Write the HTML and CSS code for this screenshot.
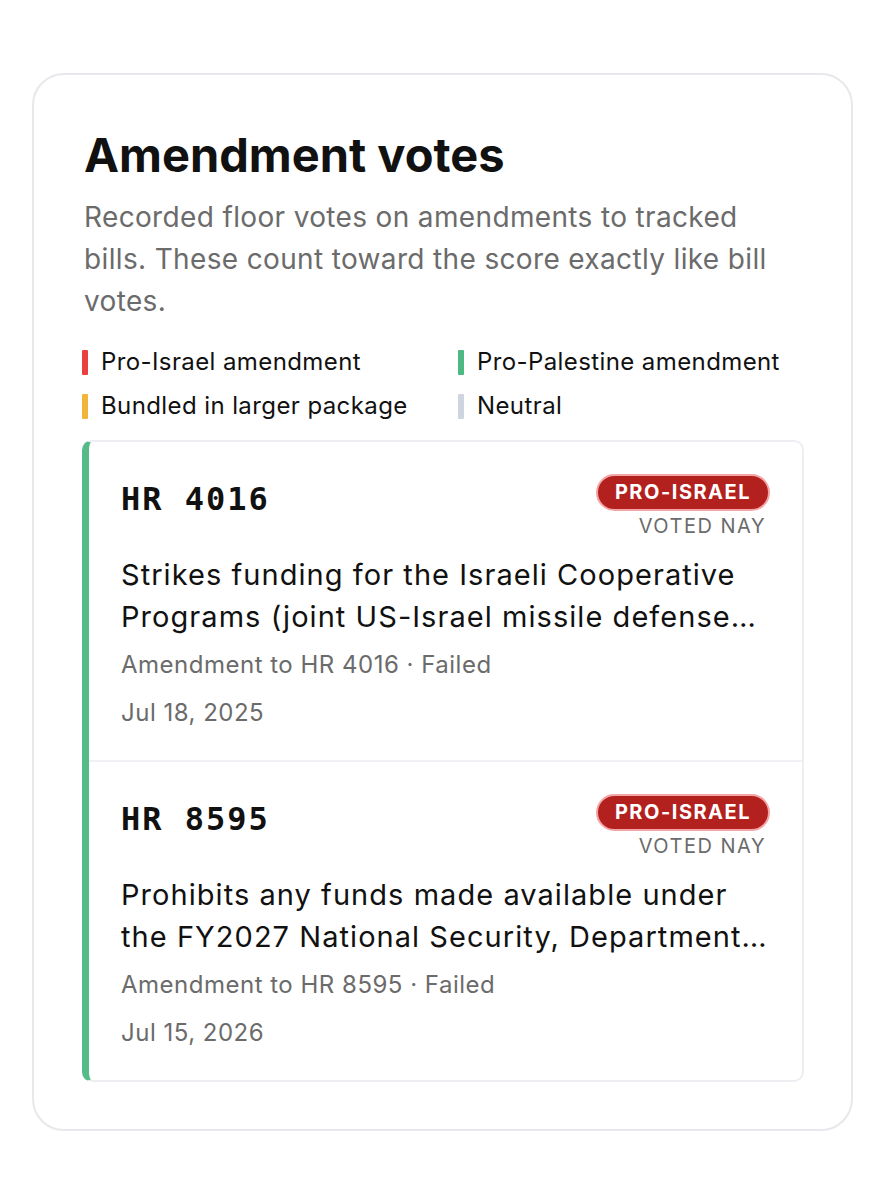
FILE: index.html
```html
<!DOCTYPE html>
<html>
<head>
    <title>Amendment votes</title>
    <meta name="viewport" content="width=device-width, initial-scale=1.0">
    <link rel="stylesheet" href="styles.css">
</head>
<body>
    <div class="panel">
        <h2 class="panel-title">Amendment votes</h2>
        <p class="panel-sub">Recorded floor votes on amendments to tracked bills. These count toward the score exactly like bill votes.</p>

        <div class="legend">
            <div class="legend-item"><span class="swatch red"></span>Pro-Israel amendment</div>
            <div class="legend-item"><span class="swatch green"></span>Pro-Palestine amendment</div>
            <div class="legend-item"><span class="swatch yellow"></span>Bundled in larger package</div>
            <div class="legend-item"><span class="swatch grey"></span>Neutral</div>
        </div>

        <div class="vote-list">
            <div class="vote">
                <div class="vote-head">
                    <span class="bill">HR 4016</span>
                    <div class="vote-tags">
                        <span class="badge">PRO-ISRAEL</span>
                        <span class="voted">VOTED NAY</span>
                    </div>
                </div>
                <p class="vote-desc">Strikes funding for the Israeli Cooperative Programs (joint US-Israel missile defense cooperation, including Iron Dome, David's Sling and Arrow)</p>
                <p class="vote-meta">Amendment to HR 4016 · Failed</p>
                <p class="vote-meta">Jul 18, 2025</p>
            </div>
            <div class="vote">
                <div class="vote-head">
                    <span class="bill">HR 8595</span>
                    <div class="vote-tags">
                        <span class="badge">PRO-ISRAEL</span>
                        <span class="voted">VOTED NAY</span>
                    </div>
                </div>
                <p class="vote-desc">Prohibits any funds made available under the FY2027 National Security, Department of State, and Related Programs Appropriations Act</p>
                <p class="vote-meta">Amendment to HR 8595 · Failed</p>
                <p class="vote-meta">Jul 15, 2026</p>
            </div>
        </div>
    </div>
</body>
</html>
```

FILE: styles.css
```css
html {
    font-family: Inter, "Noto Sans", sans-serif;
    color: #111;
}
body {
    margin: 0;
    padding: 73px 32px 32px;
    background: #fff;
}

.panel {
    border: 2px solid #e7e8ec;
    border-radius: 32px;
    padding: 52px 47px 47px 48px;
}
.panel-title {
    margin: 0 0 0 2px;
    font-size: 47px;
    line-height: 56px;
    font-weight: 700;
}
.panel-sub {
    margin: 13px 0 0 2px;
    font-size: 28px;
    line-height: 42px;
    letter-spacing: 0.35px;
    color: #6b6b6b;
}

/* legend: two columns of coloured ticks */
.legend {
    display: grid;
    grid-template-columns: 376px 1fr;
    row-gap: 14px;
    margin-top: 25px;
}
.legend-item {
    display: flex;
    align-items: center;
    gap: 13px;
    font-size: 24px;
    letter-spacing: 0.4px;
    line-height: 30px;
}
.swatch {
    width: 6px;
    height: 25px;
    border-radius: 1px;
}
.swatch.red { background: #ea4040; }
.swatch.green { background: #4cb882; }
.swatch.yellow { background: #f2b53c; }
.swatch.grey { background: #cfd5e0; }

.vote-list {
    margin-top: 19px;
    border: 2px solid #eceef2;
    border-left: 7px solid #55bb88;
    border-radius: 10px;
}
.vote {
    padding: 32px 32px 32px 32px;
}
.vote + .vote {
    border-top: 2px solid #f1f2f5;
}
.vote-head {
    display: flex;
    justify-content: space-between;
    align-items: flex-start;
}
.bill {
    font-family: "DejaVu Sans Mono", monospace;
    font-weight: 700;
    font-size: 32px;
    letter-spacing: 2px;
    margin-top: 6px;
}
.vote-tags {
    display: flex;
    flex-direction: column;
    align-items: flex-end;
}
.badge {
    background: #b3211f;
    color: #fff;
    border: 2px solid #f3a5a5;
    border-radius: 20px;
    font-size: 20px;
    font-weight: 700;
    letter-spacing: 1.5px;
    line-height: 33px;
    padding: 0 17px;
}
.voted {
    color: #6b6b6b;
    font-size: 20px;
    letter-spacing: 1.5px;
    line-height: 30px;
    margin-right: 4px;
}
.vote-desc {
    margin: 13px 0 0;
    font-size: 29px;
    line-height: 42px;
    letter-spacing: 1.05px;
    display: -webkit-box;
    -webkit-line-clamp: 2;
    -webkit-box-orient: vertical;
    overflow: hidden;
}
.vote-meta {
    margin: 18px 0 0;
    font-size: 24px;
    line-height: 30px;
    letter-spacing: 0.5px;
    color: #6b6b6b;
}
.vote-desc + .vote-meta {
    margin-top: 12px;
}
```
